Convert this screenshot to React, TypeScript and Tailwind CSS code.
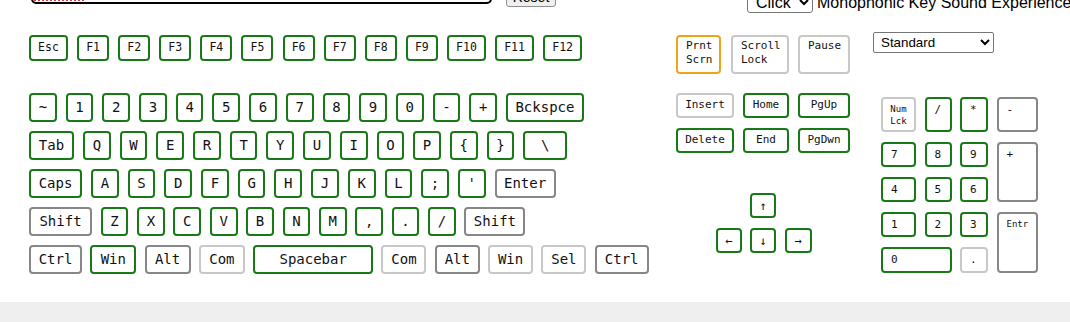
import React from "react";

type Tone = "g" | "d" | "l" | "o";

const toneCls: Record<Tone, string> = {
  g: "border-[#177a17]",
  d: "border-[#878787]",
  l: "border-[#c8c8c8]",
  o: "border-[#f0a418]",
};

type KeyDef = { label: React.ReactNode; w: string; tone?: Tone };

function Key({
  label,
  w,
  tone = "g",
  className = "",
}: KeyDef & { className?: string }) {
  return (
    <div
      className={`${toneCls[tone]} ${w} border-2 rounded-[4px] bg-white shrink-0 flex ${className}`}
    >
      {label}
    </div>
  );
}

const K1 = "w-[27.7px]";

const fRow: KeyDef[] = [
  { label: "Esc", w: "w-[39px]" },
  ...["F1", "F2", "F3", "F4", "F5", "F6", "F7", "F8", "F9"].map((l) => ({ label: l, w: "w-[32px]" })),
  { label: "F10", w: "w-[39px]" },
  { label: "F11", w: "w-[39px]" },
  { label: "F12", w: "w-[39px]" },
];

const mainRows: { gap: string; keys: KeyDef[] }[] = [
  {
    gap: "gap-[9px]",
    keys: [
      ...["~", "1", "2", "3", "4", "5", "6", "7", "8", "9", "0", "-", "+"].map((l) => ({ label: l, w: K1 })),
      { label: "Bckspce", w: "w-[78px]" },
    ],
  },
  {
    gap: "gap-[9px]",
    keys: [
      { label: "Tab", w: "w-[45px]" },
      ...["Q", "W", "E", "R", "T", "Y", "U", "I", "O", "P", "{", "}"].map((l) => ({ label: l, w: K1 })),
      { label: "\\", w: "w-[44px]" },
    ],
  },
  {
    gap: "gap-[9px]",
    keys: [
      { label: "Caps", w: "w-[53px]" },
      ...["A", "S", "D", "F", "G", "H", "J", "K", "L", ";", "'"].map((l) => ({ label: l, w: K1 })),
      { label: "Enter", w: "w-[61px]", tone: "d" },
    ],
  },
  {
    gap: "gap-[8.7px]",
    keys: [
      { label: "Shift", w: "w-[63px]", tone: "d" },
      ...["Z", "X", "C", "V", "B", "N", "M", ",", ".", "/"].map((l) => ({ label: l, w: K1 })),
      { label: "Shift", w: "w-[61px]", tone: "d" },
    ],
  },
  {
    gap: "gap-[8.3px]",
    keys: [
      { label: "Ctrl", w: "w-[53px]", tone: "d" },
      { label: "Win", w: "w-[46px]" },
      { label: "Alt", w: "w-[46px]", tone: "d" },
      { label: "Com", w: "w-[46px]", tone: "l" },
      { label: "Spacebar", w: "w-[120px]" },
      { label: "Com", w: "w-[45px]", tone: "l" },
      { label: "Alt", w: "w-[45px]", tone: "d" },
      { label: "Win", w: "w-[45px]", tone: "l" },
      { label: "Sel", w: "w-[45px]", tone: "l" },
      { label: "Ctrl", w: "w-[54px]", tone: "d" },
    ],
  },
];

const center = "items-center justify-center";
const padTL = "items-start justify-start pl-[8px] pt-[4px]";

export default function App() {
  return (
    <div className="w-[1070px] h-[322px] bg-white overflow-hidden flex flex-col text-[#111] font-['DejaVu_Sans_Mono',monospace]">
      {/* clipped controls at the top of the page */}
      <div className="h-[14px] shrink-0 flex items-end overflow-hidden font-['Liberation_Sans',Arial,sans-serif]">
        <div className="ml-[31px] mb-[10px] w-[461px] h-[30px] shrink-0 border-2 border-black rounded-[5px] flex items-end px-[1px]">
          <div className="w-[50px] mb-[1px] border-b-2 border-dotted border-[#d23b3b]" />
        </div>
        <button className="ml-[14px] mb-[7px] w-[50px] h-[22px] shrink-0 bg-[#efefef] border border-[#8f8f8f] rounded-[3px] text-[14px] text-black leading-[14px] flex items-end justify-center pb-[2px]">
          Reset
        </button>
        <select
          defaultValue="Click"
          className="ml-[191px] mb-[1px] w-[66px] h-[22px] shrink-0 bg-white border border-[#767676] rounded-[3px] text-[16px] text-black px-[4px]"
        >
          <option>Click</option>
        </select>
        <span className="ml-[4px] mb-[2px] whitespace-nowrap text-[16px] leading-[18px] text-black">
          Monophonic Key Sound Experience
        </span>
      </div>

      <div className="flex-1 flex">
        {/* main block */}
        <div className="ml-[29px] w-[621px] shrink-0 flex flex-col">
          <div className="mt-[21px] flex gap-[9.1px] h-[26px] text-[11.5px]">
            {fRow.map((k, i) => (
              <Key key={i} {...k} className={center} />
            ))}
          </div>
          <div className="mt-[32px] flex flex-col gap-[9px] text-[14px]">
            {mainRows.map((row, r) => (
              <div key={r} className={`flex h-[29px] ${row.gap}`}>
                {row.keys.map((k, i) => (
                  <Key key={i} {...k} className={center} />
                ))}
              </div>
            ))}
          </div>
        </div>

        {/* navigation cluster */}
        <div className="ml-[26px] w-[174px] shrink-0 flex flex-col text-[11px]">
          <div className="mt-[21px] flex h-[39px]">
            <Key label={<span className="leading-[14px]">Prnt<br />Scrn</span>} w="w-[45px]" tone="o" className="items-start pl-[8px] pt-[2px]" />
            <Key label={<span className="leading-[14px]">Scroll<br />Lock</span>} w="w-[58px]" tone="l" className="ml-[10px] items-start pl-[8px] pt-[2px]" />
            <Key label={<span className="leading-[14px]">Pause</span>} w="w-[52px]" tone="l" className="ml-[9px] items-start pl-[8px] pt-[2px]" />
          </div>
          <div className="mt-[19px] flex flex-col gap-[10px]">
            <div className="flex h-[25px] gap-[9px]">
              <Key label="Insert" w="w-[58px]" tone="l" className={center} />
              <Key label="Home" w="w-[46px]" className={center} />
              <Key label="PgUp" w="w-[52px]" className={center} />
            </div>
            <div className="flex h-[25px] gap-[9px]">
              <Key label="Delete" w="w-[58px]" className={center} />
              <Key label="End" w="w-[46px]" className={center} />
              <Key label="PgDwn" w="w-[52px]" className={center} />
            </div>
          </div>
          <div className="mt-[40px] ml-[40px] flex flex-col gap-[10px] text-[12px]">
            <div className="flex h-[25px] pl-[34px]">
              <Key label="↑" w="w-[26px]" className={center} />
            </div>
            <div className="flex h-[25px] gap-[8.5px]">
              <Key label="←" w="w-[25.5px]" className={center} />
              <Key label="↓" w="w-[26px]" className={center} />
              <Key label="→" w="w-[27px]" className={center} />
            </div>
          </div>
        </div>

        {/* numpad */}
        <div className="ml-[23px] flex flex-col">
          <select
            defaultValue="Standard"
            className="mt-[18px] w-[121px] h-[21px] bg-white border border-[#767676] rounded-[2px] text-[13.33px] text-black px-[3px] font-['Liberation_Sans',Arial,sans-serif]"
          >
            <option>Standard</option>
          </select>
          <div className="mt-[44px] ml-[8px] grid grid-cols-[35px_27px_28px_41px] grid-rows-[35px_25px_25px_25px_26px] gap-x-[8.5px] gap-y-[10px] text-[11px] leading-[13px]">
            <Key label={<span className="text-[9px] leading-[12px] text-center">Num<br />Lck</span>} w="w-full" tone="l" className={center} />
            <Key label="/" w="w-full" className={padTL} />
            <Key label="*" w="w-full" className={padTL} />
            <Key label="-" w="w-full" tone="d" className={padTL} />
            <Key label="7" w="w-full" className={padTL} />
            <Key label="8" w="w-full" className={padTL} />
            <Key label="9" w="w-full" className={padTL} />
            <Key label="+" w="w-full" tone="d" className={`${padTL} row-span-2`} />
            <Key label="4" w="w-full" className={padTL} />
            <Key label="5" w="w-full" className={padTL} />
            <Key label="6" w="w-full" className={padTL} />
            <Key label="1" w="w-full" className={padTL} />
            <Key label="2" w="w-full" className={padTL} />
            <Key label="3" w="w-full" className={padTL} />
            <Key label={<span className="text-[9px]">Entr</span>} w="w-full" tone="d" className={`${padTL} row-span-2`} />
            <Key label="0" w="w-full" className={`${padTL} col-span-2`} />
            <Key label="." w="w-full" tone="l" className={padTL} />
          </div>
        </div>
      </div>

      <div className="h-[20px] shrink-0 bg-[#efefef]" />
    </div>
  );
}
